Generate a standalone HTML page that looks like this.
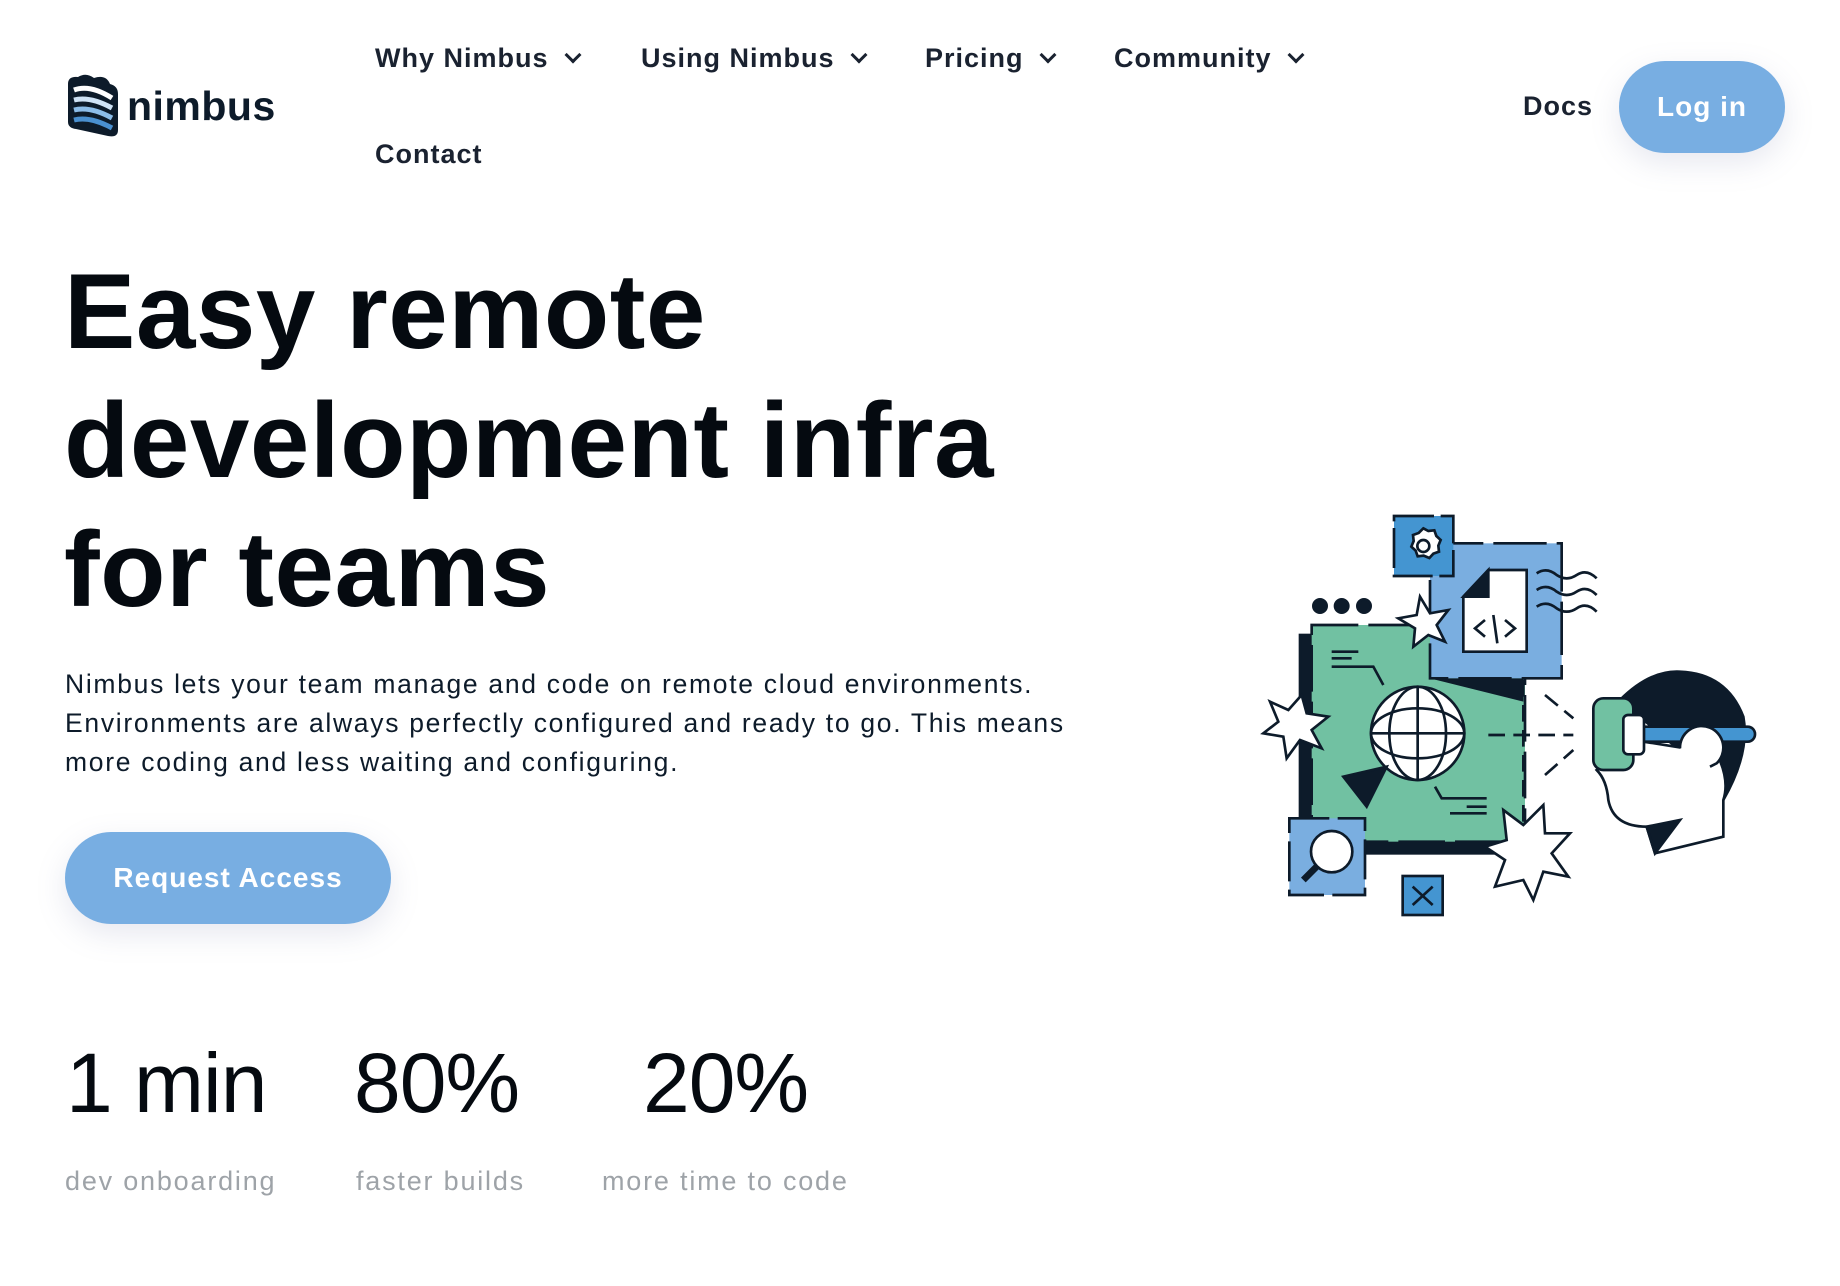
<!DOCTYPE html>
<html><head><meta charset="utf-8"><style>
*{margin:0;padding:0;box-sizing:border-box}
body{width:1840px;height:1286px;background:#fff;font-family:"Liberation Sans",sans-serif;color:#0d1b2a;position:relative;overflow:hidden}
.a{position:absolute;white-space:nowrap}
.nav{font-weight:bold;font-size:27px;color:#1a2230;letter-spacing:1px}
.chev{display:inline-block;width:12px;height:12px;border-right:3px solid #1a2230;border-bottom:3px solid #1a2230;transform:rotate(45deg);margin-left:18px;position:relative;top:-6px}
.btn{background:#78aee2;color:#fff;font-weight:bold;border-radius:50px;display:flex;align-items:center;justify-content:center;box-shadow:0 10px 30px rgba(120,130,170,.18);letter-spacing:1px}
h1{font-size:107px;line-height:129px;font-weight:bold;color:#050a10;letter-spacing:0.5px}
.p{font-size:26.5px;line-height:39px;color:#0d1b2a;letter-spacing:1.7px}
.stat{font-size:84px;color:#050a10;letter-spacing:-1px}
.lab{font-size:27px;color:#9ea3a8;letter-spacing:1.8px}
</style></head><body>
<svg class="a" style="left:64px;top:74px" width="58" height="65" viewBox="0 0 58 65">
<path d="M4 10 Q4 2 14 3 Q22 -2 30 4 Q42 0 46 10 Q54 12 54 20 L54 56 Q54 64 44 62 L12 55 Q4 54 4 48 Z" fill="#0d1b2a"/>
<path d="M10 16 Q26 10 48 24" stroke="#fff" stroke-width="5" fill="none"/>
<path d="M10 26 Q26 22 48 34" stroke="#cfe3f6" stroke-width="5" fill="none"/>
<path d="M10 36 Q26 32 48 44" stroke="#8cbde9" stroke-width="5" fill="none"/>
<path d="M10 46 Q26 42 48 54" stroke="#4a90d0" stroke-width="5" fill="none"/>
</svg>
<div class="a" style="left:127px;top:83px;font-size:41px;font-weight:bold;color:#0d1b2a;letter-spacing:0.5px">nimbus</div>
<div class="a nav" style="left:375px;top:43px">Why Nimbus<span class="chev"></span></div>
<div class="a nav" style="left:641px;top:43px">Using Nimbus<span class="chev"></span></div>
<div class="a nav" style="left:925px;top:43px">Pricing<span class="chev"></span></div>
<div class="a nav" style="left:1114px;top:43px">Community<span class="chev"></span></div>
<div class="a nav" style="left:375px;top:139px">Contact</div>
<div class="a nav" style="left:1523px;top:91px">Docs</div>
<div class="a btn" style="left:1619px;top:61px;width:166px;height:92px;font-size:28px">Log in</div>
<h1 class="a" style="left:64px;top:247px">Easy remote<br>development infra<br>for teams</h1>
<div class="a p" style="left:65px;top:665px">Nimbus lets your team manage and code on remote cloud environments.<br>Environments are always perfectly configured and ready to go. This means<br>more coding and less waiting and configuring.</div>
<div class="a btn" style="left:65px;top:832px;width:326px;height:92px;font-size:28px">Request Access</div>
<div class="a stat" style="left:66px;top:1035px">1 min</div>
<div class="a stat" style="left:354px;top:1035px">80%</div>
<div class="a stat" style="left:643px;top:1035px">20%</div>
<div class="a lab" style="left:65px;top:1166px">dev onboarding</div>
<div class="a lab" style="left:356px;top:1166px">faster builds</div>
<div class="a lab" style="left:602px;top:1166px">more time to code</div>
<svg class="a" style="left:1250px;top:500px" width="540" height="440" viewBox="0 0 1620 1320" fill="none" stroke="#0d1b2a" stroke-width="8">
<rect x="150" y="405" width="610" height="655" fill="#0d1b2a"/>
<rect x="185" y="375" width="640" height="650" fill="#71c1a2" stroke-dasharray="140 30"/>
<rect x="540" y="130" width="395" height="405" fill="#7aaee0" stroke-dasharray="160 30"/>
<polygon points="540,535 820,535 820,605" fill="#0d1b2a" stroke="none"/>
<polygon points="640,290 715,210 830,210 830,455 640,455" fill="#fff"/>
<polygon points="640,290 715,210 715,290" fill="#0d1b2a"/>
<path d="M705 360 L675 385 L705 410 M730 345 L742 430 M765 360 L795 385 L765 410"/>
<rect x="432" y="48" width="178" height="180" fill="#4495d1" stroke-dasharray="120 20"/>
<path d="M520 85 l15 8 l18 -2 l6 17 l13 12 l-7 17 l2 18 l-17 6 l-12 13 l-17 -7 l-18 2 l-6 -17 l-13 -12 l7 -17 l-2 -18 l17 -6 z" fill="#fff"/><circle cx="520" cy="138" r="18"/>
<circle cx="210" cy="318" r="20" fill="#0d1b2a"/><circle cx="275" cy="318" r="20" fill="#0d1b2a"/><circle cx="342" cy="318" r="20" fill="#0d1b2a"/>
<path d="M860 220 q30 -20 60 5 q30 20 60 0 q30 -20 60 10 M860 270 q30 -20 60 5 q30 20 60 0 q30 -20 60 10 M860 320 q30 -20 60 5 q30 20 60 0 q30 -20 60 10"/>
<polygon points="510,290 540,340 595,330 560,375 585,425 535,405 490,440 495,385 445,355 500,345" fill="#fff"/>
<polygon points="155,585 170,640 235,650 185,690 215,745 150,720 110,775 100,710 40,700 85,665 60,605 115,630" fill="#fff"/>
<path d="M245 455 H325 M245 475 H305 M245 500 H370 L400 555 M555 860 L575 895 H710 M600 940 H710 M650 920 H710"/>
<circle cx="503" cy="700" r="140" fill="#fff"/>
<ellipse cx="503" cy="700" rx="85" ry="140"/><ellipse cx="503" cy="700" rx="140" ry="75"/><path d="M503 560 V840 M363 700 H643"/>
<polygon points="280,830 410,800 350,920" fill="#0d1b2a"/>
<path d="M715 705 H970 M820 540 V980 M885 585 L970 655 M885 825 L970 750" stroke-dasharray="50 25"/>
<polygon points="760,930 820,975 880,915 885,1000 960,1000 905,1060 955,1130 880,1115 850,1200 820,1140 735,1160 765,1080 705,1040 770,1020" fill="#fff"/>
<rect x="118" y="955" width="227" height="230" fill="#7aaee0" stroke-dasharray="120 25"/>
<circle cx="245" cy="1055" r="62" fill="#fff"/><path d="M200 1100 L160 1140" stroke-width="20"/>
<rect x="458" y="1128" width="120" height="117" fill="#4495d1"/><path d="M488 1160 L548 1215 M548 1160 L488 1215"/>
<path d="M1110 600 Q1200 510 1290 515 Q1430 520 1480 650 Q1500 760 1420 900 L1300 760 Z" fill="#0d1b2a"/>
<path d="M1040 810 Q1070 840 1075 900 Q1090 980 1190 980 L1215 1060 L1420 1010 L1420 900 Q1440 840 1400 760 L1150 720 Z" fill="#fff"/>
<path d="M1190 980 L1215 1060 L1290 960 Z" fill="#0d1b2a"/>
<rect x="1150" y="680" width="365" height="45" rx="22" fill="#4495d1"/>
<path d="M1290 745 a65 65 0 1 1 110 45 l-20 10" fill="#fff"/>
<rect x="1030" y="595" width="120" height="215" rx="30" fill="#71c1a2"/>
<rect x="1120" y="645" width="62" height="118" rx="14" fill="#fff"/>
</svg>
</body></html>
